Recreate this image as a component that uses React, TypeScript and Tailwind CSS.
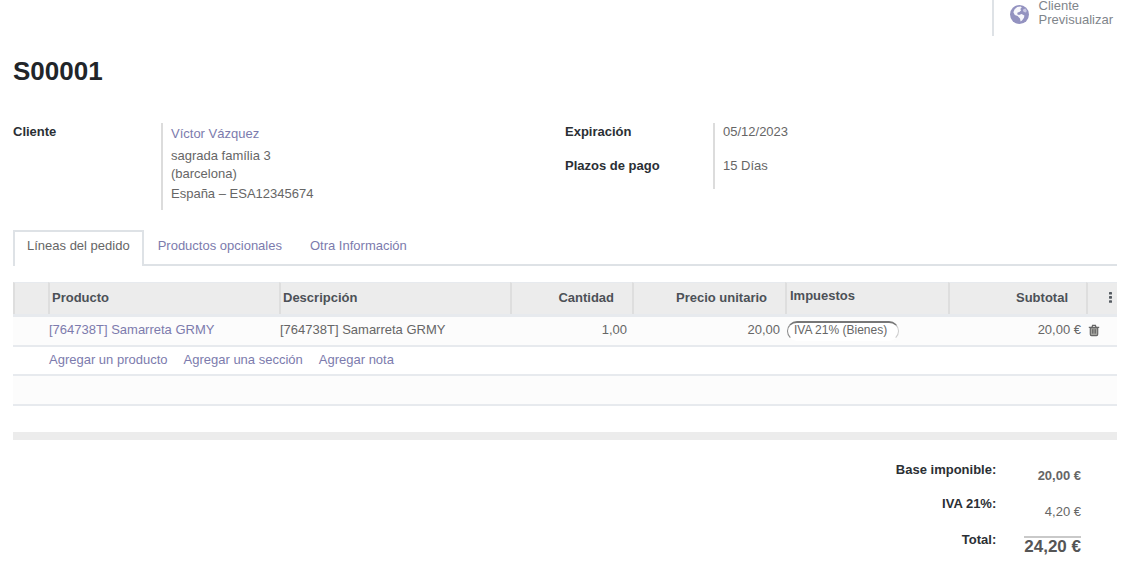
import React from "react";

const tabs = ["Líneas del pedido", "Productos opcionales", "Otra Información"];
const actions = ["Agregar un producto", "Agregar una sección", "Agregar nota"];
const headCell = "border-t border-l-2 border-[#dedede] border-t-[#e7eaee] pb-0.5 font-bold";

function GlobeIcon() {
  return (
    <svg viewBox="0 0 19 19" className="mt-[5px] size-[19px]" aria-hidden="true">
      <circle cx="9.5" cy="9.5" r="9.5" fill="#9392c0" />
      <path
        d="M4.6 4.2 7.2 2l3.4-.6 1.2 1.2-1.6 1.4 1 1.2-1.8 1.8-1.8.6-.4 1.6 1.8.8 2.6-1 2.8 1.6-.4 2.2-2 2.6-1.4 1.2-.6-3.2-2.4-2.4-2.8-1-1.4-2.8z"
        fill="#f7f7fc"
      />
      <path d="m13.4 4.2 2-.6 1.4 2.2-.8 1.8-2-.6-1.2-1.2z" fill="#c9c8e2" />
    </svg>
  );
}

function TrashIcon() {
  return (
    <svg viewBox="0 0 12 13" className="h-[13px] w-3" fill="none" stroke="#666666" aria-hidden="true">
      <path d="M.8 3.4h10.4M4 3.2 4.6 1.4h2.8L8 3.2" strokeWidth="1.3" />
      <path d="M2.3 3.6v6.6q0 1.4 1.2 1.4h5q1.2 0 1.2-1.4V3.6z" fill="#a5a5a0" strokeWidth="1.2" />
      <path d="M4.5 5.2v4.4M6 5.2v4.4M7.5 5.2v4.4" strokeWidth=".9" />
    </svg>
  );
}

function DotsIcon() {
  return (
    <svg viewBox="0 0 3 11" className="h-[11px] w-[3px]" fill="#555b61" aria-hidden="true">
      <rect y="0" width="3" height="2.6" rx=".6" />
      <rect y="4.1" width="3" height="2.6" rx=".6" />
      <rect y="8.2" width="3" height="2.6" rx=".6" />
    </svg>
  );
}

function Field({ label, children }: { label: string; children: React.ReactNode }) {
  return (
    <div className="flex">
      <dt className="w-[148px] shrink-0 font-bold text-[#2b2f34]">{label}</dt>
      <dd className="border-l-2 border-[#dcdcdc] pl-2">{children}</dd>
    </div>
  );
}

export default function App() {
  return (
    <main className="bg-white pr-3.5 pl-[13px] font-['Liberation_Sans',Arial,sans-serif] text-[13px] leading-[18px] text-[#666666]">
      <header className="flex h-9 justify-end">
        <button
          type="button"
          className="flex items-start gap-2.5 border-l-2 border-[#dee2e6] pr-1 pl-4 text-left leading-[14px] text-[#7f858b]"
        >
          <GlobeIcon />
          <span className="-mt-px">
            Cliente
            <br />
            Previsualizar
          </span>
        </button>
      </header>

      <h1 className="pt-5 text-[26px] leading-[30px] font-bold text-[#212529]">S00001</h1>

      <section className="mt-[37px] grid grid-cols-2 items-start">
        <dl>
          <Field label="Cliente">
            <div className="h-[87px] pt-0.5">
              <a href="#cliente" className="mb-1 block text-[#7c7bad]">
                Víctor Vázquez
              </a>
              <p>sagrada família 3</p>
              <p>(barcelona)</p>
              <p className="pt-0.5">España – ESA12345674</p>
            </div>
          </Field>
        </dl>
        <dl>
          <Field label="Expiración">
            <div className="h-[34px]">05/12/2023</div>
          </Field>
          <Field label="Plazos de pago">
            <div className="h-8">15 Días</div>
          </Field>
        </dl>
      </section>

      <nav className="mt-5 flex border-b-2 border-[#dee2e6]" role="tablist">
        {tabs.map((tab, i) => (
          <button
            key={tab}
            type="button"
            role="tab"
            aria-selected={i === 0}
            className={
              i === 0
                ? "-mb-0.5 h-9 border-2 border-b-0 border-[#dee2e6] bg-white px-3 pb-1.5"
                : "h-[34px] px-3.5 pb-0.5 text-[#7c7bad]"
            }
          >
            {tab}
          </button>
        ))}
      </nav>

      <table className="mt-4 w-full table-fixed border-separate border-spacing-0">
        <colgroup>
          <col className="w-[35px]" />
          <col />
          <col />
          <col className="w-[122px]" />
          <col className="w-[153px]" />
          <col className="w-[163px]" />
          <col className="w-[138px]" />
          <col className="w-[31px]" />
        </colgroup>
        <thead>
          <tr className="h-8 bg-[#ececec] text-[#4c5157]">
            <th className={headCell} />
            <th className={`${headCell} pl-0.5 text-left`}>Producto</th>
            <th className={`${headCell} pl-0.5 text-left`}>Descripción</th>
            <th className={`${headCell} pr-[18px] text-right`}>Cantidad</th>
            <th className={`${headCell} pr-[18px] text-right`}>Precio unitario</th>
            <th className="border-t border-l-2 border-[#dedede] border-t-[#e7eaee] pb-1.5 pl-[3px] text-left font-bold">
              Impuestos
            </th>
            <th className={`${headCell} pr-[18px] text-right`}>Subtotal</th>
            <th className={headCell}>
              <button type="button" aria-label="Columnas" className="flex w-full justify-end pr-[5px]">
                <DotsIcon />
              </button>
            </th>
          </tr>
        </thead>
        <tbody>
          <tr className="h-[33px] bg-[#fcfcfc] *:border-t-3 *:border-b-2 *:border-[#e7eaee]">
            <td />
            <td className="pb-0.5 pl-px">
              <a href="#producto" className="text-[#7c7bad]">
                [764738T] Samarreta GRMY
              </a>
            </td>
            <td className="pb-0.5 pl-px">[764738T] Samarreta GRMY</td>
            <td className="pr-[5px] pb-0.5 text-right">1,00</td>
            <td className="pr-[5px] pb-0.5 text-right">20,00</td>
            <td className="pl-0.5">
              <span className="block h-5 w-28 rounded-full border border-t-2 border-[#cccccc] border-t-[#777777] border-b-white border-l-[#888888] bg-white pl-1.5 text-xs leading-[14px] whitespace-nowrap">
                IVA 21% (Bienes)
              </span>
            </td>
            <td className="pr-[5px] pb-0.5 text-right">20,00 €</td>
            <td className="pb-0.5 pl-0.5">
              <button type="button" aria-label="Eliminar" className="block">
                <TrashIcon />
              </button>
            </td>
          </tr>
          <tr className="h-[29px]">
            <td className="border-b-2 border-[#e7eaee]" />
            <td colSpan={7} className="border-b-2 border-[#e7eaee] pb-0.5 pl-px">
              <div className="flex gap-4 text-[#7c7bad]">
                {actions.map((action) => (
                  <button key={action} type="button">
                    {action}
                  </button>
                ))}
              </div>
            </td>
          </tr>
          <tr className="h-[30px] bg-[#fcfcfc]">
            <td colSpan={8} className="border-b-2 border-[#e7eaee]" />
          </tr>
        </tbody>
      </table>

      <div className="mt-[26px] h-2 bg-[#ececec]" />

      <dl className="mt-[21px] grid grid-cols-[1fr_auto] gap-x-7 pr-9 text-right">
        <dt className="h-[34px] font-bold text-[#2b2f34]">Base imponible:</dt>
        <dd className="pt-1.5 font-bold">20,00 €</dd>
        <dt className="h-9 font-bold text-[#2b2f34]">IVA 21%:</dt>
        <dd className="pt-2">4,20 €</dd>
        <dt className="font-bold text-[#2b2f34]">Total:</dt>
        <dd className="pt-[5px] text-[17px] font-bold text-[#555555]">
          <div className="border-t-2 border-[#c9c9c9]">24,20 €</div>
        </dd>
      </dl>
    </main>
  );
}
